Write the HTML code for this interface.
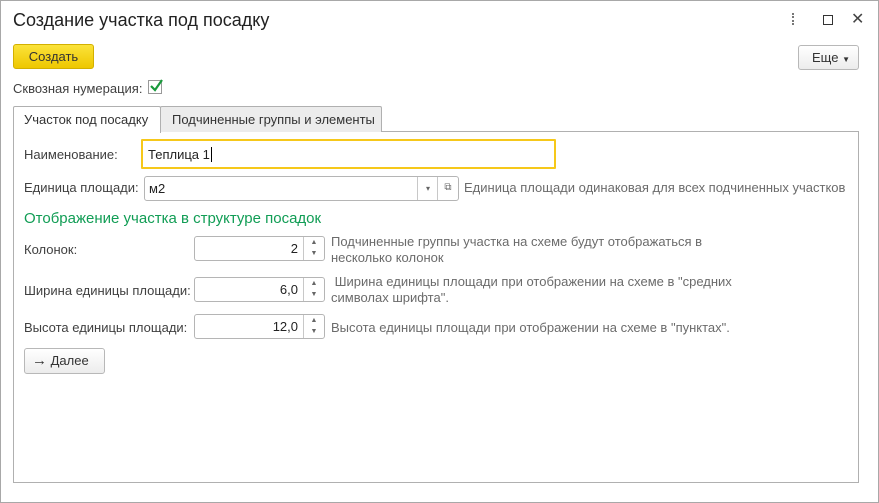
<html><head><style>
body{margin:0;width:879px;height:503px;background:#fff;font-family:"Liberation Sans",Arial,sans-serif;font-size:13px;color:#404040;position:relative;overflow:hidden}
.a{position:absolute;white-space:nowrap}
.win{position:absolute;left:0;top:0;width:877px;height:501px;border:1px solid #a8a8a8}
.inp{position:absolute;border:1px solid #b5b5b5;border-radius:3px;background:#fff;box-sizing:border-box}
.spin{position:absolute;right:0;top:0;bottom:0;width:20px;border-left:1px solid #c8c8c8;font-size:7px;color:#666;text-align:center}
.gray{color:#6b6b6b}
</style></head><body>
<div class="win"></div>
<div class="a" style="left:13px;top:10px;font-size:18px;color:#222">Создание участка под посадку</div>
<div class="a" style="left:792px;top:13px;width:3px;height:12px;border-left:2px dotted #777"></div>
<div class="a" style="left:823px;top:15px;width:8px;height:8px;border:1px solid #333"></div>
<div class="a" style="left:851px;top:9px;font-size:16px;color:#444">✕</div>
<div class="a" style="left:13px;top:44px;width:81px;height:25px;box-sizing:border-box;background:linear-gradient(#fbe33a,#eec700);border:1px solid #d3b000;border-radius:3px;text-align:center;line-height:23px;color:#333">Создать</div>
<div class="a" style="left:798px;top:45px;width:61px;height:25px;box-sizing:border-box;border:1px solid #b8b8b8;border-radius:3px;background:linear-gradient(#fff,#ececec);line-height:23px;padding-left:13px;color:#333">Еще <span style="font-size:8px">▼</span></div>
<div class="a" style="left:13px;top:81px">Сквозная нумерация:</div>
<div class="a" style="left:148px;top:80px;width:14px;height:14px;border:1px solid #999;box-sizing:border-box"></div>
<svg class="a" style="left:148px;top:78px" width="16" height="16"><path d="M3 8 L7 12 L14 2" stroke="#1a9a3c" stroke-width="2.2" fill="none"/></svg>
<div class="a" style="left:13px;top:131px;width:846px;height:352px;border:1px solid #b0b0b0;box-sizing:border-box"></div>
<div class="a" style="left:160px;top:106px;width:222px;height:26px;box-sizing:border-box;border:1px solid #b0b0b0;border-bottom:none;background:#ececec;line-height:25px;padding-left:11px;color:#333;border-radius:2px 2px 0 0">Подчиненные группы и элементы</div>
<div class="a" style="left:13px;top:106px;width:148px;height:27px;box-sizing:border-box;border:1px solid #b0b0b0;border-bottom:none;background:#fff;line-height:25px;padding-left:10px;color:#333;border-radius:2px 2px 0 0">Участок под посадку</div>
<div class="a" style="left:24px;top:147px">Наименование:</div>
<div class="a" style="left:141px;top:139px;width:415px;height:30px;box-sizing:border-box;border:2px solid #f6c81a;border-radius:1px;padding:6px 5px;color:#222">Теплица 1<span style="border-left:1px solid #000;margin-left:1px"></span></div>
<div class="a" style="left:24px;top:180px">Единица площади:</div>
<div class="inp" style="left:144px;top:176px;width:315px;height:25px;padding:4px 4px;color:#222">м2
<div class="spin" style="right:20px;font-size:8px;line-height:23px">▾</div>
<div class="spin" style="font-size:10px;line-height:22px">⧉</div></div>
<div class="a gray" style="left:464px;top:180px">Единица площади одинаковая для всех подчиненных участков</div>
<div class="a" style="left:24px;top:210px;font-size:15px;color:#119d55">Отображение участка в структуре посадок</div>
<div class="a" style="left:24px;top:242px">Колонок:</div>
<div class="inp" style="left:194px;top:236px;width:131px;height:25px;text-align:right;padding:4px 26px 0 0;color:#222">2<div class="spin" style="line-height:11px">▲<br>▼</div></div>
<div class="a gray" style="left:331px;top:234px;line-height:16px">Подчиненные группы участка на схеме будут отображаться в<br>несколько колонок</div>
<div class="a" style="left:24px;top:283px">Ширина единицы площади:</div>
<div class="inp" style="left:194px;top:277px;width:131px;height:25px;text-align:right;padding:4px 26px 0 0;color:#222">6,0<div class="spin" style="line-height:11px">▲<br>▼</div></div>
<div class="a gray" style="left:331px;top:274px;line-height:16px">&nbsp;Ширина единицы площади при отображении на схеме в "средних<br>символах шрифта".</div>
<div class="a" style="left:24px;top:320px">Высота единицы площади:</div>
<div class="inp" style="left:194px;top:314px;width:131px;height:25px;text-align:right;padding:4px 26px 0 0;color:#222">12,0<div class="spin" style="line-height:11px">▲<br>▼</div></div>
<div class="a gray" style="left:331px;top:320px">Высота единицы площади при отображении на схеме в "пунктах".</div>
<div class="a" style="left:24px;top:348px;width:81px;height:26px;box-sizing:border-box;border:1px solid #b8b8b8;border-radius:3px;background:linear-gradient(#fff,#ececec);line-height:24px;padding-left:7px;color:#333"><b style="font-size:15px">→</b> Далее</div>
</body></html>
